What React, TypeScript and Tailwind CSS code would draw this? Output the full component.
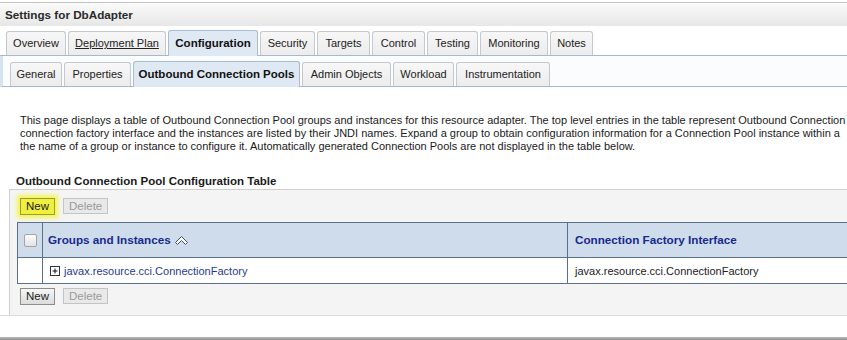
import React from "react";

const font = { fontFamily: '"Liberation Sans", Arial, sans-serif' };

type Tab = { label: string; w: string; active?: boolean; underline?: boolean };

const topTabs: Tab[] = [
  { label: "Overview", w: "w-[60px]" },
  { label: "Deployment Plan", w: "w-[98px]", underline: true },
  { label: "Configuration", w: "w-[90px]", active: true },
  { label: "Security", w: "w-[55px]" },
  { label: "Targets", w: "w-[53px]" },
  { label: "Control", w: "w-[53px]" },
  { label: "Testing", w: "w-[51px]" },
  { label: "Monitoring", w: "w-[68px]" },
  { label: "Notes", w: "w-[43px]" },
];

const subTabs: Tab[] = [
  { label: "General", w: "w-[52px]" },
  { label: "Properties", w: "w-[67px]" },
  { label: "Outbound Connection Pools", w: "w-[167px]", active: true },
  { label: "Admin Objects", w: "w-[89px]" },
  { label: "Workload", w: "w-[61px]" },
  { label: "Instrumentation", w: "w-[94px]" },
];

function TabButton({ tab }: { tab: Tab }) {
  if (tab.active) {
    return (
      <div
        className={
          "-mb-px flex h-[26px] shrink-0 items-center justify-center rounded-t-[3px] border border-b-0 border-[#a9bccf] bg-[#dfe9f4] text-[11.5px] font-bold text-[#111] " +
          tab.w
        }
      >
        {tab.label}
      </div>
    );
  }
  return (
    <div
      className={
        "flex h-[24px] shrink-0 items-center justify-center rounded-t-[3px] border border-b-0 border-[#c3c9cf] bg-gradient-to-b from-[#f7f7f7] to-[#ececec] text-[11px] text-[#222] " +
        tab.w +
        (tab.underline ? " underline" : "")
      }
    >
      {tab.label}
    </div>
  );
}

function Btn({ label, kind }: { label: string; kind: "normal" | "disabled" | "marked" }) {
  if (kind === "disabled") {
    return (
      <div className="flex h-[16px] items-center border border-[#c4c4c4] bg-[#e9e9e9] px-[5px] text-[11.5px] text-[#9a9a9a]">
        {label}
      </div>
    );
  }
  if (kind === "marked") {
    return (
      <div className="flex h-[17px] items-center border border-[#9c9c3a] bg-[#eef03c] px-[5px] text-[11.5px] text-[#222] shadow-[0_0_4px_3px_#f4f45a]">
        {label}
      </div>
    );
  }
  return (
    <div className="flex h-[17px] items-center border border-[#8c8c8c] bg-gradient-to-b from-[#f6f6f6] to-[#dcdcdc] px-[5px] text-[11.5px] text-[#222]">
      {label}
    </div>
  );
}

function SortIcon() {
  return (
    <svg width="15" height="11" viewBox="0 0 15 11" className="ml-[3px]">
      <path
        d="M1.5 7.5 L7.5 1.5 L13.5 7.5 L11.5 9.5 L7.5 5.5 L3.5 9.5 Z"
        fill="#fff"
        stroke="#3b4a7a"
        strokeWidth="1"
        strokeLinejoin="round"
      />
    </svg>
  );
}

function PlusBox() {
  return (
    <svg width="10" height="10" viewBox="0 0 10 10" className="mr-[4px]">
      <rect x="0.5" y="0.5" width="9" height="9" fill="#fff" stroke="#333" />
      <path d="M2.5 5 H7.5 M5 2.5 V7.5" stroke="#111" strokeWidth="1" />
    </svg>
  );
}

export default function App() {
  return (
    <div className="relative h-[340px] w-[847px] overflow-hidden bg-white" style={font}>
      <div className="w-[940px]">
        <div className="mt-[2px] flex h-[24px] items-center border-t border-[#c4c4c4] bg-gradient-to-b from-[#fafafa] to-[#e7e7e7] pl-[5px] text-[11.7px] font-bold text-[#2a2a2a]">
          Settings for DbAdapter
        </div>

        <div className="flex items-end gap-[2px] border-b border-[#a6b8ca] pl-[6px] pt-[4px]">
          {topTabs.map((t) => (
            <TabButton key={t.label} tab={t} />
          ))}
        </div>

        <div className="flex items-end gap-[2px] border-b border-l-[3px] border-b-[#a6b8ca] border-l-[#d7e3ef] bg-[#fbfcfe] pl-[7px] pt-[5px]">
          {subTabs.map((t) => (
            <TabButton key={t.label} tab={t} />
          ))}
        </div>

        <div className="ml-[20px] mt-[27px] whitespace-nowrap text-[11px] leading-[13px] text-[#1a1a1a]">
          <div>
            This page displays a table of Outbound Connection Pool groups and instances for this resource adapter. The top level entries in the table represent Outbound Connection
          </div>
          <div>
            connection factory interface and the instances are listed by their JNDI names. Expand a group to obtain configuration information for a Connection Pool instance within a
          </div>
          <div>
            the name of a group or instance to configure it. Automatically generated Connection Pools are not displayed in the table below.
          </div>
        </div>

        <div className="ml-[16px] mt-[20px] text-[11.5px] font-bold text-[#1a1a1a]">
          Outbound Connection Pool Configuration Table
        </div>

        <div className="ml-[9px] mt-[-1px] border-l border-t border-[#cfcfcf] bg-[#f4f4f4] pb-[10px] pt-[8px]">
          <div className="flex gap-[8px] pl-[10px]">
            <Btn label="New" kind="marked" />
            <Btn label="Delete" kind="disabled" />
          </div>

          <div className="ml-[7px] mt-[7px] border border-r-0 border-[#5d708a]">
            <div className="flex h-[34px] bg-[#cfdcec]">
              <div className="flex w-[25px] items-center justify-center border-r border-[#5d708a]">
                <div className="h-[13px] w-[13px] rounded-[2px] border border-[#a3a3a3] bg-gradient-to-b from-[#fdfdfd] to-[#e3e3e3]" />
              </div>
              <div className="flex w-[525px] items-center border-r border-[#5d708a] pl-[5px] text-[11.7px] font-bold text-[#172a8c]">
                Groups and Instances
                <SortIcon />
              </div>
              <div className="flex flex-1 items-center pl-[7px] text-[11.7px] font-bold text-[#172a8c]">
                Connection Factory Interface
              </div>
            </div>
            <div className="flex h-[26px] border-t border-[#5d708a] bg-white">
              <div className="w-[25px] border-r border-[#5d708a]" />
              <div className="flex w-[525px] items-center border-r border-[#5d708a] pl-[7px] text-[11px] text-[#1f3b8f]">
                <PlusBox />
                javax.resource.cci.ConnectionFactory
              </div>
              <div className="flex flex-1 items-center pl-[7px] text-[11px] text-[#222]">
                javax.resource.cci.ConnectionFactory
              </div>
            </div>
          </div>

          <div className="mt-[4px] flex gap-[8px] pl-[10px]">
            <Btn label="New" kind="normal" />
            <Btn label="Delete" kind="disabled" />
          </div>
        </div>
        <div className="h-px bg-[#dcdcdc]" />
      </div>

      <div className="absolute bottom-0 left-0 h-[3px] w-full bg-gradient-to-b from-[#bdbdbd] to-[#8f8f8f]" />
    </div>
  );
}
